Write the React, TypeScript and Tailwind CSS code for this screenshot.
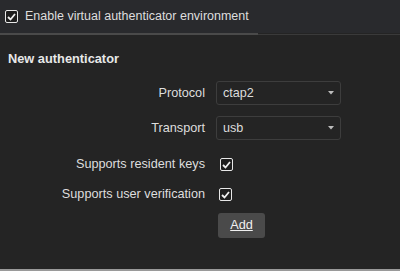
const font = { fontFamily: '"Liberation Sans", Arial, sans-serif' }

function Check({ className = '' }: { className?: string }) {
  return (
    <span
      className={`flex h-[13px] w-[13px] items-center justify-center rounded-[2px] border-[1.5px] border-[#e8e8e8] bg-[#1e1e1e] ${className}`}
    >
      <svg width="9" height="8" viewBox="0 0 9 8" fill="none" stroke="#f0f0f0" strokeWidth="1.8">
        <polyline points="1,4 3.5,6.5 8,1" />
      </svg>
    </span>
  )
}

function Select({ value }: { value: string }) {
  return (
    <div className="flex h-[24px] w-[125px] items-center justify-between rounded-[3px] border border-[#3d3d3d] bg-[#242424] pl-[6px] pr-[6px] text-[12.6px] text-[#dcdcdc]">
      <span>{value}</span>
      <svg width="6" height="4" viewBox="0 0 6 4"><polygon points="0,0 6,0 3,3.5" fill="#bdbdbd" /></svg>
    </div>
  )
}

export default function App() {
  return (
    <div className="flex h-[271px] w-[400px] flex-col bg-[#242424] text-[#dedede]" style={font}>
      <div className="flex h-[33px] items-center gap-[7px] bg-[#292a2d] pl-[5px] text-[12.5px]">
        <Check />
        <span>Enable virtual authenticator environment</span>
      </div>
      <div className="flex h-[2px]">
        <div className="w-[258px] bg-[#4a4a4a]" />
        <div className="flex-1 border-b border-[#3a3a3a]" />
      </div>
      <div className="flex flex-1 flex-col">
        <div className="pl-[8px] pt-[14px] text-[12.8px] font-bold text-[#e8e8e8]">New authenticator</div>
        <div className="mt-[13px] grid grid-cols-[205px_auto] items-center gap-x-[11px] text-[12.7px]">
          <div className="text-right">Protocol</div>
          <Select value="ctap2" />
          <div className="mt-[11px] text-right">Transport</div>
          <div className="mt-[11px]"><Select value="usb" /></div>
          <div className="mt-[15px] text-right">Supports resident keys</div>
          <div className="mt-[15px] pl-[4px]"><Check /></div>
          <div className="mt-[11px] text-right">Supports user verification</div>
          <div className="mt-[11px] pl-[3px]"><Check /></div>
          <div />
          <div className="mt-[9px] pl-[2px]">
            <button className="h-[25px] w-[47px] rounded-[3px] bg-[#4a4a4a] text-[12.7px] text-[#f0f0f0] underline">Add</button>
          </div>
        </div>
        <div className="flex-1" />
      </div>
      <div className="h-[2px] bg-[#9a9a9a]" />
    </div>
  )
}
